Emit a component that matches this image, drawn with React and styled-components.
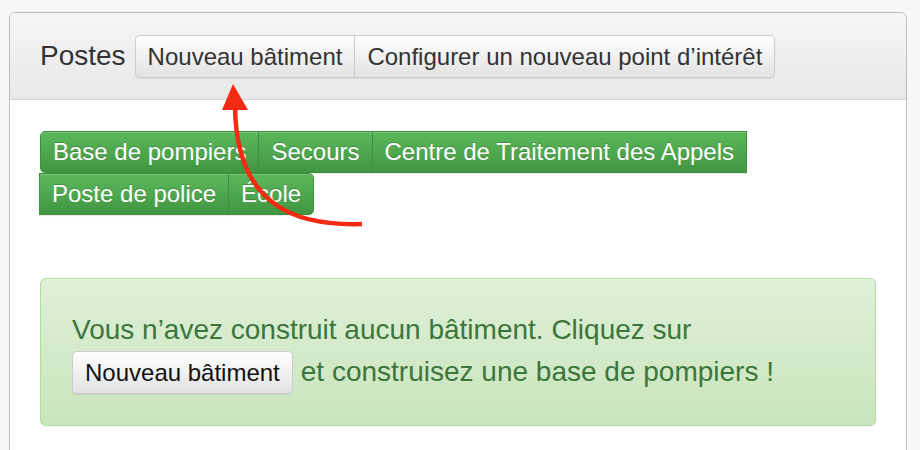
import React from "react";
import styled, { createGlobalStyle } from "styled-components";

const GlobalStyle = createGlobalStyle`
    body {
        margin: 0;
        background: #f7f7f7;
        font-family: "Liberation Sans", Helvetica, Arial, sans-serif;
        color: #333333;
    }
`;

const Page = styled.div`
    position: relative;
    min-height: 450px;
    padding: 12px 13px 0 9px;
    overflow: hidden;
    box-sizing: border-box;
`;

const Panel = styled.div`
    background: #ffffff;
    border: 1px solid #bdbdbd;
    border-radius: 6px 6px 0 0;
    overflow: hidden;
`;

const PanelHeading = styled.div`
    display: flex;
    align-items: baseline;
    padding: 22px 30px 21px;
    background: linear-gradient(to bottom, #f5f5f5 0%, #e8e8e8 100%);
    border-bottom: 1px solid #d6d6d6;
`;

const PanelTitle = styled.h3`
    margin: 0 9px 0 0;
    font-size: 28px;
    line-height: 32px;
    font-weight: normal;
    color: #333333;
`;

const Group = styled.div`
    display: flex;
    flex-wrap: ${(p) => (p.$wrap ? "wrap" : "nowrap")};
    max-width: ${(p) => (p.$wrap ? "722px" : "none")};
`;

// bouton gris (bootstrap-theme "default")
const Button = styled.button`
    font-family: inherit;
    font-size: 24px;
    line-height: 29px;
    padding: 6px 12px;
    color: ${(p) => (p.$dark ? "#111111" : "#333333")};
    background: linear-gradient(to bottom, #ffffff 0%, #e2e2e2 100%);
    border: 1px solid #cccccc;
    border-radius: 5px;
    box-shadow: inset 0 1px 0 rgba(255, 255, 255, 0.15), 0 1px 1px rgba(0, 0, 0, 0.075);
    cursor: pointer;

    ${Group} > & {
        border-radius: 0;
    }
    ${Group} > &:first-child {
        border-radius: 5px 0 0 5px;
    }
    ${Group} > &:last-child {
        border-radius: 0 5px 5px 0;
    }
    ${Group} > & + & {
        margin-left: -1px;
    }
`;

const InlineButton = styled(Button)`
    display: inline-block;
    vertical-align: baseline;
    margin-right: 8px;
`;

const SuccessButton = styled.button`
    font-family: inherit;
    font-size: 24px;
    line-height: 28px;
    padding: 6px 12px;
    color: #ffffff;
    background: linear-gradient(to bottom, #5cb85c 0%, #419641 100%);
    border: 1px solid #3e8f3e;
    border-radius: 0;
    box-shadow: inset 0 1px 0 rgba(255, 255, 255, 0.15), 0 1px 1px rgba(0, 0, 0, 0.075);
    text-shadow: 0 -1px 0 rgba(0, 0, 0, 0.2);
    margin-left: -1px;
    cursor: pointer;

    &:first-child {
        margin-left: 0;
        border-radius: 5px 0 0 5px;
    }
    &:last-child {
        border-radius: 0 5px 5px 0;
    }
`;

const PanelBody = styled.div`
    padding: 31px 30px 30px;
`;

const Alert = styled.div`
    margin-top: 63px;
    padding: 30px 31px 31px;
    font-size: 28px;
    line-height: 42px;
    color: #3c763d;
    background: linear-gradient(to bottom, #dff0d8 0%, #c8e5bc 100%);
    border: 1px solid #b2dba1;
    border-radius: 6px;
    box-shadow: inset 0 1px 0 rgba(255, 255, 255, 0.25), 0 1px 2px rgba(0, 0, 0, 0.05);
`;

const Overlay = styled.svg`
    position: absolute;
    top: 0;
    left: 0;
    pointer-events: none;
`;

const categories = [
    "Base de pompiers",
    "Secours",
    "Centre de Traitement des Appels",
    "Poste de police",
    "École",
];

const App = () => {
    return (
        <Page>
            <GlobalStyle />
            <Panel>
                <PanelHeading>
                    <PanelTitle>Postes</PanelTitle>
                    <Group>
                        <Button>Nouveau bâtiment</Button>
                        <Button>Configurer un nouveau point d’intérêt</Button>
                    </Group>
                </PanelHeading>
                <PanelBody>
                    <Group $wrap>
                        {categories.map((c) => (
                            <SuccessButton key={c}>{c}</SuccessButton>
                        ))}
                    </Group>
                    <Alert>
                        Vous n’avez construit aucun bâtiment. Cliquez sur{" "}
                        <InlineButton $dark>Nouveau bâtiment</InlineButton>
                        et construisez une base de pompiers !
                    </Alert>
                </PanelBody>
            </Panel>

            {/* flèche rouge vers le bouton "Nouveau bâtiment" */}
            <Overlay width="920" height="450" viewBox="0 0 920 450">
                <path
                    d="M362 224 C300 226, 236 210, 235 106"
                    fill="none"
                    stroke="#f42a12"
                    strokeWidth="4.5"
                    strokeLinecap="butt"
                />
                <polygon points="233,84 222,110 248,110" fill="#f42a12" />
            </Overlay>
        </Page>
    );
};

export default App;
